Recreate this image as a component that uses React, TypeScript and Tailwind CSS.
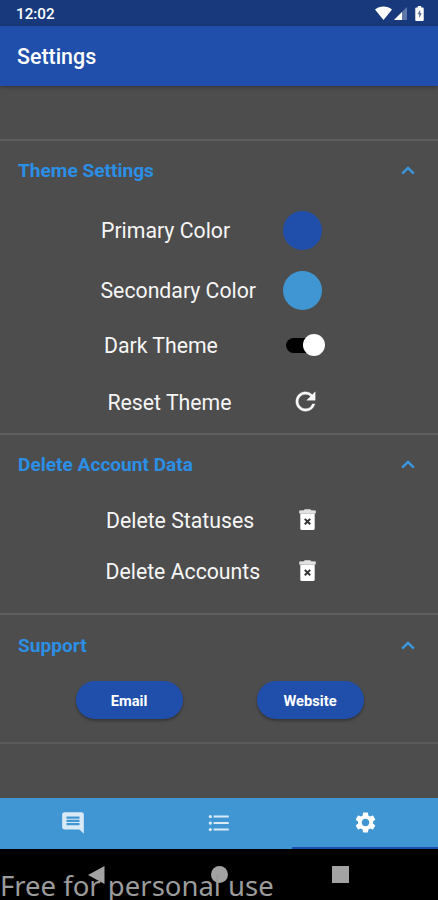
import type { ReactNode } from "react";
import { MdComment, MdFormatListBulleted, MdSettings } from "react-icons/md";

const StatusBar = () => {
  return (
    <div className="h-[26px] bg-[#183a7c] flex items-center justify-between pl-[16px] pr-[14px] text-white">
      <p className="text-[15.2px] font-medium leading-none pt-[3px]">12:02</p>
      <div className="flex items-center">
        <svg width="17" height="14" viewBox="0 0 17 14" fill="#fff">
          <path d="M0 3.4C4.6-.5 12.4-.5 17 3.4L8.5 14z" />
        </svg>
        <svg className="ml-[2px]" width="13" height="13" viewBox="0 0 13 13">
          <path d="M13 0v13H0z" fill="#5f78aa" />
          <path d="M8 5v8H0z" fill="#fff" />
        </svg>
        <svg className="ml-[8px]" width="9" height="15" viewBox="0 0 9 16">
          <path d="M2.700 0h3.600v1.500H8q1 0 1 1V15q0 1-1 1H1q-1 0-1-1V2.500q0-1 1-1h1.700z" fill="#fff" />
          <path d="M5.300 4L2.400 8.800h1.800V13l2.700-5.200H5.300z" fill="#5a6b98" />
        </svg>
      </div>
    </div>
  );
};

const TrashIcon = () => (
  <svg width="17" height="22" viewBox="0 0 17 22">
    <path d="M5 1.300Q5 .3 6 .3h5q1 0 1 1l4.800.3v3H.2v-3z" fill="#e2e2e2" />
    <path d="M1.300 4.400h14.400v15q0 1.600-1.600 1.600H2.900q-1.600 0-1.600-1.600z" fill="#fff" />
    <path d="M5.800 9.900l5.400 5.400M11.200 9.900l-5.400 5.400" stroke="#333" strokeWidth="2" />
  </svg>
);

const ResetIcon = () => (
  <svg width="29" height="29" viewBox="0 0 24 24" fill="#f8f8f8" stroke="#f8f8f8" strokeWidth="0.3">
    <path d="M17.650 6.350A7.958 7.958 0 0 0 12 4c-4.420 0-7.990 3.580-7.990 8s3.570 8 7.990 8c3.730 0 6.840-2.550 7.730-6h-2.080A5.990 5.990 0 0 1 12 18c-3.310 0-6-2.690-6-6s2.690-6 6-6c1.660 0 3.140.69 4.220 1.780L13 11h7V4l-2.350 2.350z" />
  </svg>
);

const Section = ({
  title,
  className,
  headClass = "h-[60px]",
  children,
}: {
  title: string;
  className: string;
  headClass?: string;
  children: ReactNode;
}) => {
  return (
    <div className={`border-t-2 border-[#5e5e5e] ${className}`}>
      <div className={`flex items-center justify-between pl-[18px] pr-[23px] text-[#2b8fe6] ${headClass}`}>
        <p className="text-[19.1px] font-bold">{title}</p>
        <svg className="mb-[2px]" width="14" height="9" viewBox="0 0 14 9" fill="none" stroke="#3a98e0" strokeWidth="2.4">
          <path d="M1.200 7.700L7 2l5.800 5.700" />
        </svg>
      </div>
      {children}
    </div>
  );
};

// the labels don't share one left edge, so each row brings its own padding
const Row = ({
  label,
  className,
  iconClass,
  children,
}: {
  label: string;
  className: string;
  iconClass: string;
  children: ReactNode;
}) => {
  return (
    <div className={`flex items-center ${className}`}>
      <p className="grow text-[21.25px] whitespace-nowrap text-[#f6f6f6]">{label}</p>
      <div className={`shrink-0 ${iconClass}`}>{children}</div>
    </div>
  );
};

const Button = ({ children }: { children: string }) => (
  <button className="h-[38px] w-[107px] rounded-full bg-[#204eab] pt-[2px] text-[14.7px] font-bold text-white shadow-[0_2px_3px_rgba(0,0,0,0.3)]">
    {children}
  </button>
);

const App = () => {
  return (
    <div className="relative flex h-[900px] w-[438px] flex-col overflow-hidden bg-[#4d4d4d] font-['Roboto',sans-serif]">
      <StatusBar />
      <header className="z-10 flex h-[60px] items-center bg-[#204eab] pl-[17px] pt-[2px] shadow-[0_1px_4px_rgba(0,0,0,0.35)]">
        <h1 className="text-[21.4px] font-medium text-white">Settings</h1>
      </header>

      <main className="h-[712px] pt-[53px]">
        <Section title="Theme Settings" className="h-[294px]">
          <Row label="Primary Color" className="h-[60px] pl-[101px]" iconClass="mr-[116px] mb-[2px]">
            <div className="size-[39px] rounded-full bg-[#204eab]" />
          </Row>
          <Row label="Secondary Color" className="h-[59px] pl-[100.5px]" iconClass="mr-[116px] mb-px">
            <div className="size-[39px] rounded-full bg-[#3f96d3]" />
          </Row>
          <Row label="Dark Theme" className="h-[51px] pl-[104px] pt-px" iconClass="mr-[113px] mb-[2px]">
            <div className="flex h-[15px] w-[39px] items-center justify-end rounded-full bg-black">
              <div className="size-[22px] rounded-full bg-white" />
            </div>
          </Row>
          <Row label="Reset Theme" className="h-[62px] pl-[107.5px] pt-px" iconClass="mr-[118px] mb-[3px]">
            <ResetIcon />
          </Row>
        </Section>

        <Section title="Delete Account Data" className="h-[180px]">
          <Row label="Delete Statuses" className="h-[51px] pl-[106px]" iconClass="mr-[122px] mb-[2px]">
            <TrashIcon />
          </Row>
          <Row label="Delete Accounts" className="h-[51px] pl-[105.5px]" iconClass="mr-[122px] mb-[2px]">
            <TrashIcon />
          </Row>
        </Section>

        <Section title="Support" className="h-[129px]" headClass="h-[62px]">
          <div className="flex gap-[74px] pl-[75.5px] pt-[4px]">
            <Button>Email</Button>
            <Button>Website</Button>
          </div>
        </Section>
        <div className="border-t-2 border-[#5a5a5a]" />
      </main>

      <nav className="grid h-[51px] grid-cols-3 bg-[#3f96d3] text-[#d9eaf6]">
        <div className="flex items-center justify-center pb-[2px]">
          <MdComment size={26} />
        </div>
        <div className="flex items-center justify-center pb-[2px]">
          <MdFormatListBulleted size={26} />
        </div>
        <div className="flex items-center justify-center border-b-2 border-[#1c4fae] text-white">
          <MdSettings size={25} />
        </div>
      </nav>

      <div className="flex h-[51px] items-center bg-black pl-[88px]">
        <svg width="17" height="18" viewBox="0 0 17 18">
          <path d="M16.500 0v18L0 9z" fill="#a3a3a3" />
        </svg>
        <div className="ml-[106px] size-[17px] rounded-full bg-[#a3a3a3]" />
        <div className="ml-[104px] size-[17px] bg-[#a3a3a3]" />
      </div>
      <p className="absolute left-0 top-[872px] whitespace-nowrap font-['Noto_Sans',sans-serif] text-[27.5px] leading-[28px] text-[#9c9c9c]">
        Free for personal use
      </p>
    </div>
  );
};

export default App;
